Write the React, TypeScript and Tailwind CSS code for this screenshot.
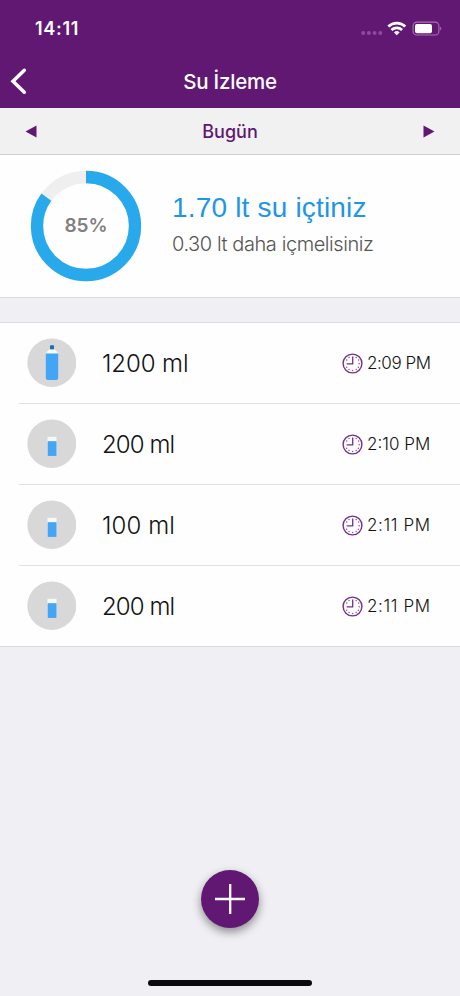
import React from 'react';

type Entry = {
  amount: string;
  time: string;
  kind: 'bottle' | 'glass';
  amountClass: string;
  timeClass: string;
};

const entries: Entry[] = [
  { amount: '1200 ml', time: '2:09 PM', kind: 'bottle', amountClass: 'tracking-[-0.1px]', timeClass: 'tracking-[-0.45px]' },
  { amount: '200 ml', time: '2:10 PM', kind: 'glass', amountClass: 'tracking-[-0.9px]', timeClass: 'tracking-normal' },
  { amount: '100 ml', time: '2:11 PM', kind: 'glass', amountClass: 'tracking-[0.1px]', timeClass: 'tracking-[0.6px]' },
  { amount: '200 ml', time: '2:11 PM', kind: 'glass', amountClass: 'tracking-[-0.9px]', timeClass: 'tracking-[0.6px]' },
];

function StatusIcons() {
  return (
    <svg width="84" height="20" viewBox="0 0 84 20" className="block">
      <g fill="#8e4a9f">
        <circle cx="4.2" cy="15" r="2" />
        <circle cx="9.9" cy="15" r="2" />
        <circle cx="15.600" cy="15" r="2" />
        <circle cx="21.300" cy="15" r="2" />
      </g>
      <g fill="none" stroke="#fff" strokeWidth="2.700">
        <path d="M29.300 8.600a12.300 12.300 0 0 1 17 0" />
        <path d="M32.500 12a7.700 7.700 0 0 1 10.600 0" />
      </g>
      <path d="M37.800 17.200l-2.800-2.800a4 4 0 0 1 5.600 0z" fill="#fff" />
      <rect x="54.100" y="4.100" width="25.800" height="12.900" rx="3.800" fill="none" stroke="#a673b3" strokeWidth="1.100" />
      <rect x="56" y="6" width="17" height="9.200" rx="2" fill="#fff" />
      <path d="M81.200 8.500c1.500.5 1.500 3.600 0 4.100z" fill="#a673b3" />
    </svg>
  );
}

function ProgressRing() {
  return (
    <div className="relative h-[112px] w-[112px]">
      <svg width="112" height="112" viewBox="0 0 112 112" className="block">
        <circle cx="56" cy="56" r="49" fill="none" stroke="#efefef" strokeWidth="12.300" />
        <circle
          cx="56"
          cy="56"
          r="49"
          fill="none"
          stroke="#27a9ec"
          strokeWidth="12.300"
          pathLength="100"
          strokeDasharray="85 15"
          transform="rotate(-90 56 56)"
        />
      </svg>
      <span className="absolute inset-0 flex items-center justify-center pt-px text-[19px] font-semibold text-[#808080]">
        85%
      </span>
    </div>
  );
}

function Vessel({ kind }: { kind: Entry['kind'] }) {
  return (
    <svg width="50" height="50" viewBox="0 0 50 50" className="block shrink-0">
      <ellipse cx="25.800" cy="24.700" rx="24.500" ry="24.200" fill="#d8d8d8" />
      {kind === 'bottle' ? (
        <g>
          <rect x="24" y="7.200" width="4" height="4.500" rx="0.600" fill="#1f6cb0" />
          <path d="M19.800 15.800c.4-2 2-2.600 3.800-4.200h4.800c1.800 1.600 3.400 2.200 3.800 4.200z" fill="#fff" />
          <path d="M19.800 15.600h12.400v24.400q0 2-2 2h-8.400q-2 0-2-2z" fill="#42a5f5" />
        </g>
      ) : (
        <g>
          <rect x="21.500" y="17.800" width="9" height="5" fill="#f6f8fa" />
          <rect x="21.800" y="22.200" width="8.600" height="14.700" fill="#42a5f5" />
        </g>
      )}
    </svg>
  );
}

function ClockIcon() {
  return (
    <svg width="21" height="21" viewBox="0 0 21 21" className="block shrink-0">
      <circle cx="10.500" cy="10.500" r="9.400" fill="none" stroke="#74308a" strokeWidth="1.400" />
      <path d="M10.700 3.600v7.200H4.700" fill="none" stroke="#74308a" strokeWidth="1.300" />
      <g fill="#8c52a0">
        <circle cx="14.200" cy="4.600" r=".75" />
        <circle cx="16.600" cy="7" r=".75" />
        <circle cx="17.200" cy="10.700" r=".75" />
        <circle cx="16.400" cy="14.200" r=".75" />
        <circle cx="14.200" cy="16.600" r=".75" />
        <circle cx="10.600" cy="17.400" r=".75" />
        <circle cx="7" cy="16.600" r=".75" />
        <circle cx="4.700" cy="14.200" r=".75" />
        <circle cx="4.700" cy="7" r=".75" />
        <circle cx="7" cy="4.600" r=".75" />
      </g>
    </svg>
  );
}

export default function App() {
  return (
    <div className="flex h-[996px] w-[460px] flex-col overflow-hidden bg-[#efeff4] font-['Inter','Liberation_Sans',sans-serif]">
      <header className="h-[108px] shrink-0 bg-[#601872] text-white">
        <div className="flex h-[54px] items-start justify-between pt-[18px] pr-[17px] pl-[35px]">
          <span className="text-[18px] leading-[22px] font-semibold tracking-[0.7px]">14:11</span>
          <StatusIcons />
        </div>
        <div className="grid h-[54px] grid-cols-[60px_1fr_60px] items-center">
          <svg width="30" height="30" viewBox="0 0 30 30" className="ml-[5px] block">
            <path d="M19.300 4.300L8 15.300l11.300 10.900" fill="none" stroke="#fff" strokeWidth="3.500" strokeLinecap="round" strokeLinejoin="miter" />
          </svg>
          <h1 className="pt-px text-center text-[20.5px] leading-6 font-medium tracking-[-0.2px]">Su İzleme</h1>
        </div>
      </header>

      <nav className="flex h-[47px] shrink-0 items-center justify-between border-b border-[#cfcfd1] bg-[#f1f1f1] px-[25px] text-[#601872]">
        <svg width="12" height="14" viewBox="0 0 12 14" className="block">
          <path d="M.5 7.500L11.500 1.500v12z" fill="currentColor" />
        </svg>
        <span className="pt-[2px] text-[18px] leading-6 font-medium">Bugün</span>
        <svg width="12" height="14" viewBox="0 0 12 14" className="block">
          <path d="M11.500 7.500L.5 1.500v12z" fill="currentColor" />
        </svg>
      </nav>

      <section className="flex h-[143px] shrink-0 items-center border-b border-[#d9d9de] bg-[#fefefe] pl-[30px]">
        <ProgressRing />
        <div className="ml-[30px] pb-px">
          <p className="font-['Liberation_Sans',sans-serif] text-[28px] leading-[36px] tracking-[0.18px] whitespace-nowrap text-[#1e96e6]">1.70 lt su içtiniz</p>
          <p className="text-[20px] leading-[36px] font-light tracking-[-0.42px] whitespace-nowrap text-[#555]">0.30 lt daha içmelisiniz</p>
        </div>
      </section>

      <ul className="mt-6 shrink-0 border-y border-[#d9d9de] bg-[#fefefe]">
        {entries.map((entry, i) => (
          <li key={i} className="pl-[19px]">
            <div className={`flex items-center pr-[28px] ${i < entries.length - 1 ? 'h-[81px] border-b border-[#e2e2e5]' : 'h-[80px]'}`}>
              <div className="ml-[7px]">
                <Vessel kind={entry.kind} />
              </div>
              <span className={`ml-[26px] pt-[2px] text-[24px] font-light text-[#111] ${entry.amountClass}`}>{entry.amount}</span>
              <span className="ml-auto flex w-[90px] items-center gap-1">
                <ClockIcon />
                <span className={`pt-[2px] text-[17px] font-light whitespace-nowrap text-[#111] ${entry.timeClass}`}>{entry.time}</span>
              </span>
            </div>
          </li>
        ))}
      </ul>

      <footer className="mt-auto flex shrink-0 flex-col items-center pb-[10px]">
        <button className="mb-[52px] flex h-[58px] w-[58px] items-center justify-center rounded-full bg-[#601872] shadow-[0_4px_10px_rgba(0,0,0,0.42)]" aria-label="Ekle">
          <svg width="30" height="30" viewBox="0 0 30 30" className="block">
            <path d="M15.200 0v30M0 15h30" stroke="#fff" strokeWidth="2.300" />
          </svg>
        </button>
        <div className="h-[6px] w-[164px] rounded-full bg-[#0b0b0d]" />
      </footer>
    </div>
  );
}
